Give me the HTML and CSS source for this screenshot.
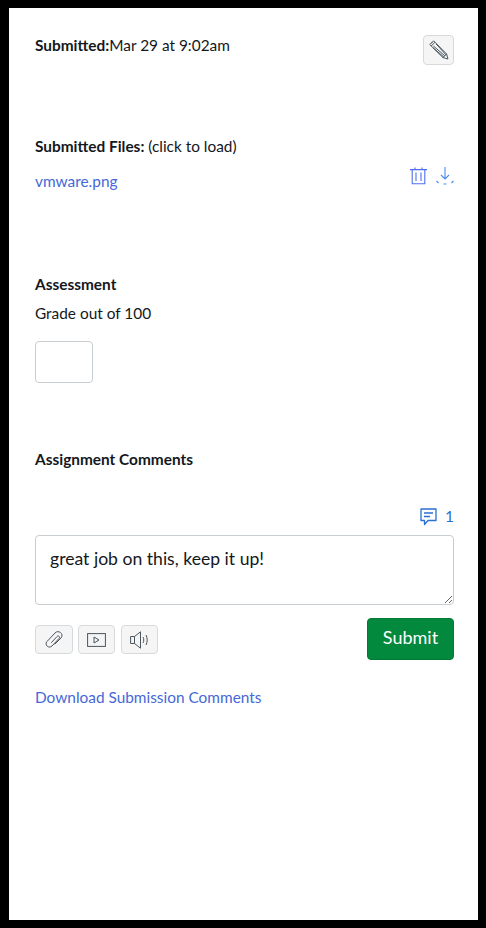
FILE: index.html
```html
<!DOCTYPE html>
<html lang="en">

<head>
    <meta charset="UTF-8">
    <meta name="viewport" content="width=device-width, initial-scale=1.0">
    <title>Submission details</title>
    <link rel="stylesheet" href="styles.css">
</head>

<body>
    <div class="panel">
        <div class="submitted-row">
            <div class="submitted-text"><b>Submitted:</b>Mar 29 at 9:02am</div>
            <button class="icon-btn edit-btn" aria-label="Edit">
                <svg width="20" height="20" viewBox="0 0 20 20" fill="none" stroke="#4a555e" stroke-width="1" stroke-linejoin="round">
                    <path d="M4.6 0.8 L0.8 4.6 L14 17.6 L19 19 L17.6 14 Z" />
                    <path d="M2 3.4 L3.4 2 M2.2 6 L6 2.2 M4.4 6 L15.8 15.8 M14 17.6 L17.6 14" />
                    <path d="M4 7.8 L14.8 17 M7.2 4 L17 14.8" />
                </svg>
            </button>
        </div>

        <div class="files-heading"><b>Submitted Files:</b> (click to load)</div>
        <div class="file-row">
            <a class="link" href="#">vmware.png</a>
            <div class="file-actions">
                <svg width="17" height="18" viewBox="0 0 17 18" fill="none" stroke="#4f6ff0" stroke-width="1.1">
                    <path d="M0 2.6 H17 M5 2.6 V0.5 M12 2.6 V0.5 M2.2 2.6 V16.8 H14.8 V2.6 M6 5.5 V14 M11 5.5 V14" />
                </svg>
                <svg width="18" height="18" viewBox="0 0 18 18" fill="none" stroke="#4a8cf0" stroke-width="1.1">
                    <path d="M9 0 V11.5 M5 8 L9 12 L13 8 M0.5 14 L2.5 16 M17.5 14 L15.5 16 M7.5 17 H10.5" />
                </svg>
            </div>
        </div>

        <h3 class="section-title assessment-title">Assessment</h3>
        <div class="grade-label">Grade out of 100</div>
        <input class="grade-input" type="text">

        <h3 class="section-title comments-title">Assignment Comments</h3>
        <div class="comment-count">
            <svg width="17" height="18" viewBox="0 0 17 18" fill="none" stroke="#2b6fd0" stroke-width="1.3" stroke-linejoin="round">
                <path d="M1 1 H16 V12.5 H8 L4.5 16.5 V12.5 H1 Z" />
                <path d="M4 5 H13 M4 8.5 H10" />
            </svg>
            <span>1</span>
        </div>
        <textarea class="comment-box">great job on this, keep it up!</textarea>

        <div class="comment-actions">
            <div class="media-btns">
                <button class="icon-btn attach-btn" aria-label="Attach">
                    <svg width="20" height="20" viewBox="0 0 20 20" fill="none" stroke="#4a555e" stroke-width="1" stroke-linecap="round">
                        <path d="M7.5 12.5 L13 6.5 C14.5 5 16.5 7 15 8.5 L8 16 C5 19 0 15 3 11.5 L11 3 C14 -0.5 20.5 3.5 17 8 L11 14" />
                    </svg>
                </button>
                <button class="icon-btn media-btn" aria-label="Record video">
                    <svg width="19" height="14" viewBox="0 0 19 14" fill="none" stroke="#4a555e" stroke-width="1">
                        <rect x="0.6" y="0.6" width="17.8" height="12.8" />
                        <path d="M7 4 L12 7 L7 10 Z" />
                    </svg>
                </button>
                <button class="icon-btn audio-btn" aria-label="Record audio">
                    <svg width="19" height="18" viewBox="0 0 19 18" fill="none" stroke="#4a555e" stroke-width="1">
                        <path d="M0.6 5.5 H4.5 L10.5 0.8 V17.2 L4.5 12.5 H0.6 Z M4.5 5.5 V12.5" />
                        <path d="M13 6 C14 7.5 14 10.5 13 12 M16 4 C17.6 7 17.6 11 16 14" />
                    </svg>
                </button>
            </div>
            <button class="submit-btn">Submit</button>
        </div>

        <a class="link download-link" href="#">Download Submission Comments</a>
    </div>
</body>

</html>
```

FILE: styles.css
```css
html,
body {
    height: 100%;
}

body {
    margin: 0;
    box-sizing: border-box;
    padding: 8px 8px 8px 9px;
    background-color: black;
    font-family: 'Lato', sans-serif;
    font-size: 15.4px;
    line-height: 21px;
    color: #14181c;
}

.panel {
    display: flex;
    flex-direction: column;
    align-items: flex-start;
    box-sizing: border-box;
    height: 100%;
    padding: 27px 24px 0 26px;
    background-color: white;
}

b {
    font-weight: 700;
}

.link {
    color: #4668d8;
    text-decoration: none;
}

.submitted-row {
    display: flex;
    justify-content: space-between;
    align-items: flex-start;
    width: 100%;
}

.icon-btn {
    display: flex;
    align-items: center;
    justify-content: center;
    box-sizing: border-box;
    padding: 0;
    background-color: #f5f5f5;
    border: 1px solid #d7dadd;
    border-radius: 4px;
}

.edit-btn {
    width: 31px;
    height: 30px;
}

.files-heading {
    margin-top: 71px;
}

.file-row {
    display: flex;
    justify-content: space-between;
    align-items: flex-start;
    width: 100%;
    margin-top: 14px;
}

.file-actions {
    display: flex;
    gap: 9px;
    margin-top: -4px;
}

.section-title {
    margin: 0;
    font-size: 15.4px;
    line-height: 21px;
    font-weight: 700;
}

.assessment-title {
    margin-top: 82px;
}

.grade-label {
    margin-top: 8px;
}

.grade-input {
    box-sizing: border-box;
    width: 58px;
    height: 42px;
    margin-top: 17px;
    background-color: white;
    border: 1px solid #c7cdd1;
    border-radius: 4px;
}

.comments-title {
    margin-top: 66px;
}

.comment-count {
    display: flex;
    align-items: center;
    align-self: flex-end;
    gap: 8px;
    margin-top: 36px;
    color: #2b6fd0;
}

.comment-box {
    box-sizing: border-box;
    width: 100%;
    height: 70px;
    margin-top: 8px;
    padding: 11px 14px;
    background-color: white;
    border: 1px solid #c7cdd1;
    border-radius: 4px;
    font-family: 'Lato', sans-serif;
    font-size: 17.6px;
    line-height: 24px;
    color: #14181c;
}

.comment-actions {
    display: flex;
    justify-content: space-between;
    align-items: flex-start;
    width: 100%;
    margin-top: 13px;
}

.media-btns {
    display: flex;
    gap: 5px;
    margin-top: 7px;
}

.attach-btn {
    width: 38px;
    height: 29px;
}

.media-btn {
    width: 37px;
    height: 29px;
}

.audio-btn {
    width: 37px;
    height: 29px;
    margin-left: 1px;
}

.submit-btn {
    width: 87px;
    height: 42px;
    padding: 0 0 4px;
    background-color: #03893d;
    border: 1px solid #027a36;
    border-radius: 4px;
    font-family: 'Lato', sans-serif;
    font-size: 18px;
    color: white;
}

.download-link {
    margin-top: 27px;
}
```
